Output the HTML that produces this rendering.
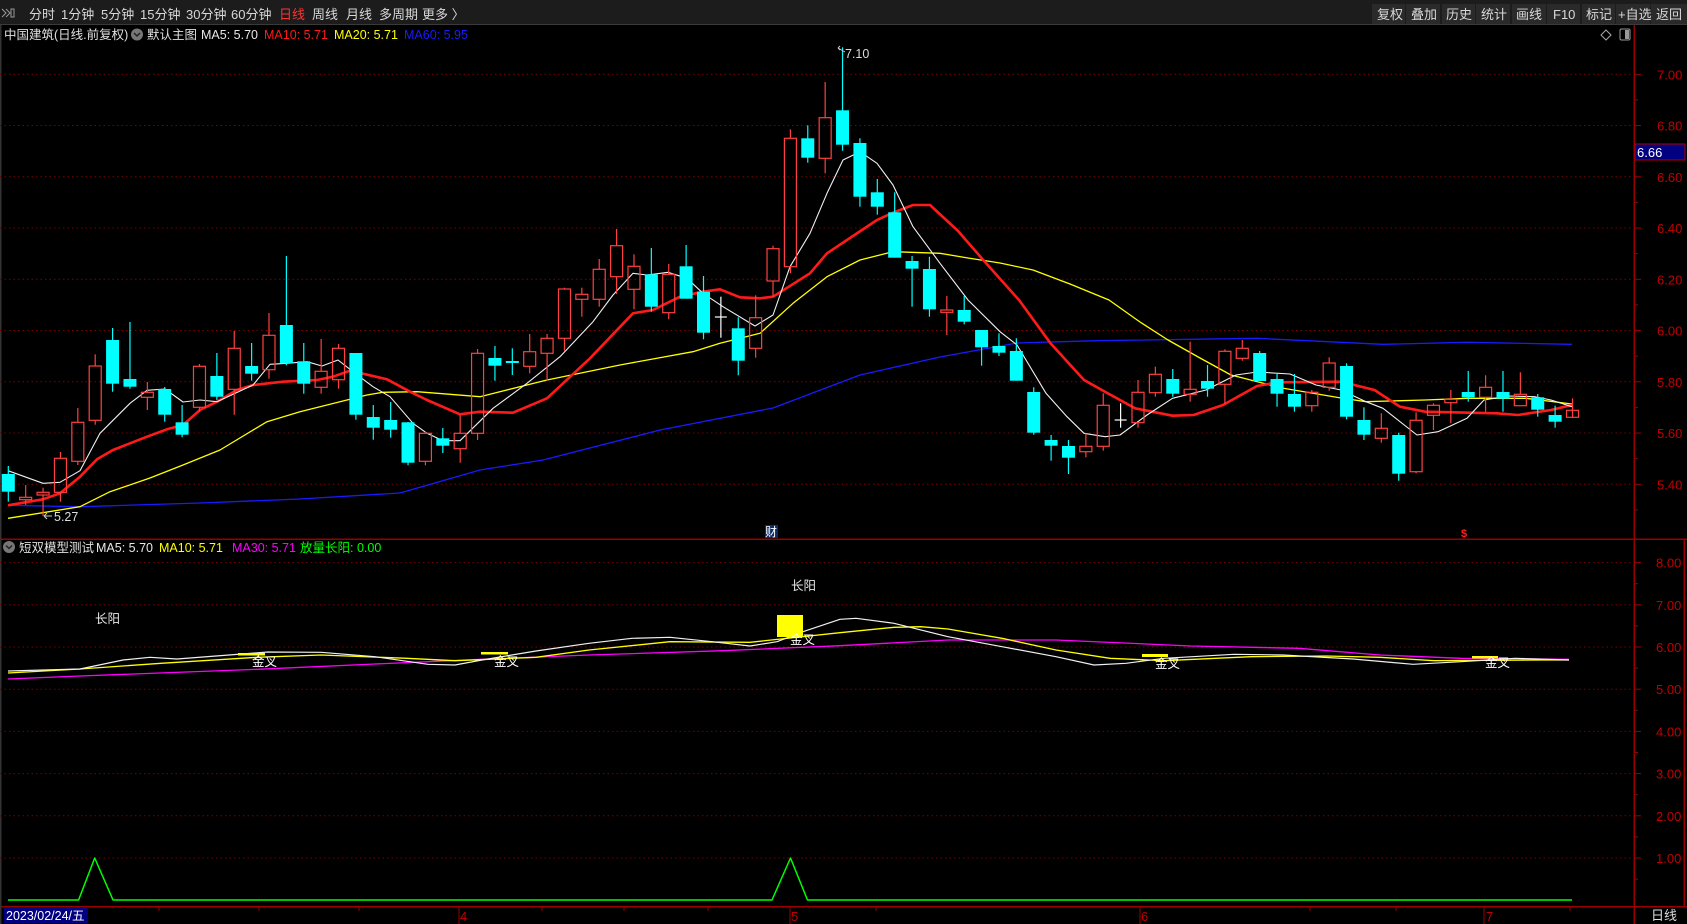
<!DOCTYPE html>
<html><head><meta charset="utf-8">
<style>
html,body{margin:0;padding:0;background:#000;width:1687px;height:924px;overflow:hidden}
body{font-family:"Liberation Sans","Noto Sans CJK SC",sans-serif}
svg{display:block}
</style></head>
<body>
<svg id="s" width="1687" height="924" xmlns="http://www.w3.org/2000/svg" font-family="Liberation Sans, Noto Sans CJK SC, sans-serif">
<rect x="0" y="0" width="1687" height="924" fill="#000"/>
<rect x="0" y="0" width="1687" height="25" fill="#1c1c1c"/>
<rect x="0" y="24" width="1687" height="1" fill="#3a3a3a"/>
<g fill="#2a2a2a">
<rect x="1372" y="4" width="33" height="20"/><rect x="1406" y="4" width="34" height="20"/>
<rect x="1442" y="4" width="33" height="20"/><rect x="1476" y="4" width="34" height="20"/>
<rect x="1512" y="4" width="34" height="20"/><rect x="1547" y="4" width="33" height="20"/>
<rect x="1582" y="4" width="33" height="20"/><rect x="1616" y="4" width="34" height="20"/>
<rect x="1651" y="4" width="36" height="20"/>
</g>
<g fill="none" stroke="#9a9a9a" stroke-width="1">
<path d="M2 9 L6 13 L2 17 M6 9 L10 13 L6 17"/><rect x="11" y="9" width="3" height="8"/>
</g>
<g font-size="13" fill="#d8d8d8">
<text x="29" y="19">分时</text><text x="61" y="19">1分钟</text><text x="101" y="19">5分钟</text>
<text x="140" y="19">15分钟</text><text x="186" y="19">30分钟</text><text x="231" y="19">60分钟</text>
<text x="279" y="19" fill="#ff3333">日线</text><text x="312" y="19">周线</text><text x="346" y="19">月线</text>
<text x="379" y="19">多周期</text><text x="422" y="19">更多 〉</text>
<text x="1377" y="19">复权</text><text x="1411" y="19">叠加</text><text x="1446" y="19">历史</text>
<text x="1481" y="19">统计</text><text x="1516" y="19">画线</text><text x="1553" y="19">F10</text>
<text x="1586" y="19">标记</text><text x="1618" y="19">+自选</text><text x="1656" y="19">返回</text>
</g>
<g font-size="12.5">
<text x="4" y="39" fill="#e0e0e0">中国建筑(日线.前复权)</text>
<circle cx="137" cy="34.5" r="6" fill="#777"/><path d="M134 33 L137 36 L140 33" stroke="#222" stroke-width="1.5" fill="none"/>
<text x="147" y="39" fill="#e0e0e0">默认主图</text>
<text x="201" y="39" fill="#e8e8e8">MA5: 5.70</text>
<text x="264" y="39" fill="#ff1a1a">MA10: 5.71</text>
<text x="334" y="39" fill="#ffff00">MA20: 5.71</text>
<text x="404" y="39" fill="#1a1aff">MA60: 5.95</text>
</g>
<path d="M1606 30 L1611 35 L1606 40 L1601 35 Z" fill="none" stroke="#aaa"/>
<rect x="1620" y="29" width="10" height="11" rx="1.5" fill="none" stroke="#999"/><rect x="1625" y="30" width="4" height="9" fill="#999"/>
<rect x="1633.5" y="25" width="1.5" height="899" fill="#9a0000"/>
<rect x="0" y="538.5" width="1687" height="1.5" fill="#9a0000"/>
<rect x="0" y="906" width="1687" height="1.5" fill="#9a0000"/>
<rect x="1683.5" y="539" width="1.5" height="368" fill="#9a0000"/>
<rect x="0" y="25" width="1.5" height="899" fill="#333"/>
<g id="grid"></g>
<g id="lines"></g>
<g id="candles"></g>
<g id="lower"></g>
<rect x="1635" y="144" width="50" height="16" fill="#000080" stroke="#b00000" stroke-width="1"/>
<text x="1637" y="157" font-size="13" fill="#fff">6.66</text>
<text x="845" y="58" font-size="12.5" fill="#ddd">7.10</text>
<path d="M845 52 L838 48 M838 48 L840 46 M838 48 L840 50" stroke="#ccc" fill="none"/>
<text x="54" y="521" font-size="12.5" fill="#ddd">5.27</text>
<path d="M52 516 L44 516 M44 516 L47 513 M44 516 L47 519" stroke="#ccc" fill="none"/>
<rect x="765" y="525" width="13" height="13" fill="#0a2a6a"/>
<text x="765" y="536" font-size="12" fill="#fff">财</text>
<text x="1461" y="537" font-size="11" fill="#ff2020" font-weight="bold">$</text>
<g font-size="12.5">
<circle cx="9" cy="547" r="6" fill="#777"/><path d="M6 545.5 L9 548.5 L12 545.5" stroke="#222" stroke-width="1.5" fill="none"/>
<text x="19" y="552" fill="#e0e0e0">短双模型测试</text>
<text x="96" y="552" fill="#e8e8e8">MA5: 5.70</text>
<text x="159" y="552" fill="#ffff00">MA10: 5.71</text>
<text x="232" y="552" fill="#ff00ff">MA30: 5.71</text>
<text x="300" y="552" fill="#00ff00">放量长阳: 0.00</text>
</g>
<rect x="4" y="907" width="84" height="16" fill="#000080"/>
<text x="6" y="920" font-size="12.5" fill="#fff">2023/02/24/五</text>
<g font-size="13" fill="#c00000">
<text x="460" y="921">4</text><text x="791" y="921">5</text><text x="1141" y="921">6</text><text x="1486" y="921">7</text>
</g>
<g stroke="#9a0000" stroke-width="1">
<path d="M459 907V924M790 907V924M1140 907V924M1484 907V924"/>
<path d="M159 907V911M259 907V911M359 907V911M542 907V911M624 907V911M708 907V911M876 907V911M1310 907V911M1396 907V911M1570 907V911"/>
</g>
<text x="1651" y="920" font-size="13" fill="#ddd">日线</text>
</svg>
<script>
var NS="http://www.w3.org/2000/svg";
function el(p,t,a,txt){var e=document.createElementNS(NS,t);for(var k in a)e.setAttribute(k,a[k]);if(txt)e.textContent=txt;p.appendChild(e);return e;}
var grid=document.getElementById('grid');
var prices=["7.00","6.80","6.60","6.40","6.20","6.00","5.80","5.60","5.40"];
prices.forEach(function(p,i){var y=74.3+i*51.25;
el(grid,'line',{x1:0,y1:y,x2:1633,y2:y,stroke:'#7a0000','stroke-dasharray':'1.5 3'});
el(grid,'line',{x1:1634,y1:y,x2:1641,y2:y,stroke:'#9a0000'});
el(grid,'line',{x1:1634,y1:y+25.6,x2:1638,y2:y+25.6,stroke:'#9a0000'});
el(grid,'text',{x:1657,y:y+5,'font-size':13,fill:'#c00000'},p);});
for(var v=8;v>=1;v--){var y=858-(v-1)*42.2;
el(grid,'line',{x1:0,y1:y,x2:1633,y2:y,stroke:'#7a0000','stroke-dasharray':'1.5 3'});
el(grid,'line',{x1:1634,y1:y,x2:1641,y2:y,stroke:'#9a0000'});
el(grid,'line',{x1:1634,y1:y+21.1,x2:1638,y2:y+21.1,stroke:'#9a0000'});
el(grid,'text',{x:1656,y:y+5,'font-size':13,fill:'#c00000'},v.toFixed(2));}
var C=[
['d',474,491.7,466,501.7],['u',497.3,499.7,485,505],['u',492.3,495,487.7,516],['u',458.3,492.3,452,501.7],
['u',422.3,461.3,408,465],['u',366,420.3,354.3,424.7],['d',340,383.7,328,391.7],['d',379,386.7,322,388.7],
['u',392.3,397.3,382,410],['d',389,414.7,387,421.7],['d',422.3,434.7,405,437.3],['u',366.3,407.3,364,411.7],
['d',376,396.7,353,400],['u',348.3,389.3,331,414.7],['d',366,373.7,343,380.7],['u',335.3,369.7,313,378.7],
['d',325,363.3,256,365.3],['d',361.3,383.7,343,393.7],['u',371.3,387.3,339,393.7],['u',348.3,379.7,344,388.7],
['d',353,414.7,353,419.7],['d',417,427.7,405,439.7],['d',420,429.7,402,437.7],['d',422.3,462.7,422,465.3],
['u',433.3,461.3,431.7,465.3],['d',438.3,445.7,428,453],['u',433.3,448.7,415.3,462.7],['u',353.3,433.3,349,440],
['d',358,365.7,346,380.7],['d',361,363,348.3,375],['u',351.7,366.3,334,373.3],['u',338.3,353.3,334,380.7],
['u',289,338.3,287.7,350.7],['u',294.3,299.3,287.7,316.7],['u',269.3,299.3,259,306.7],['u',245.7,276.7,229,294],
['u',266.3,289.3,254.3,309.3],['d',274.3,306.7,248,311.7],['u',274.3,312.7,264,319.3],['d',266.3,298.7,245,298.7],
['d',291.7,332.7,276,339.3],['x',317,317,296.7,337.7],['d',328.3,360.7,317.3,375.3],['u',317.7,348.3,295.3,357.7],
['u',248.7,281,245.7,296.7],['u',138.3,266.7,129.3,273.3],['d',138.3,157.7,125.3,162.7],['u',117.7,158.3,82,173.3],
['d',110.3,144.7,47.3,150.7],['d',143,196.7,138.3,206.7],['d',192.3,206.7,179,214.7],['d',212.3,257.7,192.3,257.7],
['d',261,268.7,256,306.7],['d',269,309.3,256.7,316.7],['u',310,312.3,296,335],['d',310,321.7,296,324.3],
['d',330,347.3,330,365.7],['d',346,352.7,333.3,356],['d',351,380.7,338.3,380.7],['d',392,432.7,387.3,434.7],
['d',440,445.7,435,460.7],['d',446,457.7,440,474],['u',446.3,451.7,433.3,457.3],['u',405.3,446.3,393.3,450.7],
['x',420,420,403.3,427.7],['u',392.3,422.7,380,427.7],['u',374.3,392.7,366.7,396.7],['d',379,393.7,369,396.7],
['u',389.3,394.3,341.7,401.7],['d',381,388.7,365,396.7],['u',351.3,384.3,349.3,404],['u',348.3,358.3,340,360.7],
['d',353,381,351,381],['d',379,393.7,374,406.7],['d',394,406.7,374,411.7],['u',392.3,405.7,390,411.7],
['u',363,387.3,357.3,390.7],['d',366,416.7,363.3,419.3],['d',420,434.7,407.3,440],['u',428.3,438.3,413.3,442.7],
['d',435,473.7,432.7,480.7],['u',420.3,471.7,412.3,473.3],['u',405.3,415.3,403.3,430],['u',399.3,402.7,390,423.3],
['d',392,397.3,371,401.7],['u',387.3,397.3,375.3,411.7],['d',392,398.7,371,411.7],['u',394.3,405.7,372.3,405.7],
['d',397.3,409.7,394,416.7],['d',415,421.7,405.7,427.7],['u',410.3,417.3,398.3,410]];
var cg=document.getElementById('candles');
C.forEach(function(c,i){var x=8.3+i*17.38;var t=c[0];
if(t=='d'){el(cg,'line',{x1:x,y1:c[3],x2:x,y2:c[4],stroke:'#00ffff','stroke-width':1.2});
el(cg,'rect',{x:x-6.5,y:c[1],width:13,height:Math.max(1.5,c[2]-c[1]),fill:'#00ffff'});}
else if(t=='u'){el(cg,'line',{x1:x,y1:c[3],x2:x,y2:c[1],stroke:'#ff4040','stroke-width':1.2});
el(cg,'line',{x1:x,y1:c[2],x2:x,y2:c[4],stroke:'#ff4040','stroke-width':1.2});
el(cg,'rect',{x:x-6,y:c[1],width:12,height:Math.max(1,c[2]-c[1]),fill:'none',stroke:'#ff4040','stroke-width':1.2});}
else{el(cg,'line',{x1:x,y1:c[3],x2:x,y2:c[4],stroke:'#fff','stroke-width':1.2});
el(cg,'line',{x1:x-6,y1:c[1],x2:x+6,y2:c[1],stroke:'#fff','stroke-width':1.2});}});
var lg=document.getElementById('lines');
function pl(g,pts,col,w){el(g,'polyline',{points:pts.map(function(p){return p.join(',')}).join(' '),fill:'none',stroke:col,'stroke-width':w,'stroke-linejoin':'round'});}
pl(lg,[[8,505.3],[80,506.7],[200,503],[300,499],[400,493],[480,470],[543,460],[660,430],[773,408],[860,375],[940,357],[1017,343],[1097,340.7],[1257,338.3],[1383,344.3],[1467,342.3],[1572,344.3]],'#1a1aff',1.3);
pl(lg,[[8,518.3],[80,506.7],[110,491.7],[150,478],[183,465],[220,450],[267,421.7],[300,411.7],[367,395],[383,392.3],[417,391.7],[480,396.7],[547,380],[620,365],[693,351.7],[720,343.3],[760,333.3],[793,303.3],[827,276.7],[860,260],[893,251.7],[940,253.3],[968,258],[1000,263],[1033,270],[1070,284],[1109,300],[1140,322],[1168,340],[1200,358],[1231,375],[1282,388],[1341,398],[1366,401.7],[1425,400],[1467,398.3],[1526,398.3],[1572,404]],'#ffff00',1.3);
pl(lg,[[8,505.3],[43,499.3],[60,493.3],[80,476.7],[97,459.3],[113,450],[147,436.7],[167,429.3],[183,425],[200,410],[217,401.7],[237,390],[253,385],[283,381.7],[317,380],[333,376.7],[350,370.7],[387,379.3],[410,391.7],[427,400],[460,414.3],[480,411.7],[513,412.7],[547,398.3],[590,358.3],[633,313.3],[653,310],[680,296.7],[703,291.7],[720,289.3],[740,297.3],[760,298.3],[773,296.7],[810,273.3],[827,253.3],[847,240],[877,220],[893,212.7],[913,205],[930,205],[958,231],[985,262],[1019,300],[1050.5,343.3],[1084,380],[1105,391.7],[1135,408.3],[1172.5,415.7],[1193.6,415],[1223,405],[1257,386],[1278,382.3],[1341,381.7],[1374.5,390],[1400,406.7],[1425,411.7],[1497,413.3],[1518,415],[1551,410],[1572,405]],'#ff1a1a',2.6);
pl(lg,[[8,470.7],[43,483.3],[60,482.3],[80,470.7],[100,433.3],[130,403.3],[147,390.3],[165,389],[183,402],[200,400],[217,401.7],[253,385],[270,364.3],[287,363.3],[307,361.7],[322,366],[338,360],[353,371.7],[373,386.7],[390,396.7],[413,423.3],[427,433.3],[443,440.7],[460,440.7],[493,408.3],[527,383.3],[560,356.7],[593,321.7],[613,295],[633,273.3],[647,275],[668,272.3],[687,278.3],[703,293.3],[723,306.7],[755,326],[773,315],[790,266.7],[810,233.3],[827,193.3],[843,160],[860,151.7],[877,163.3],[893,185],[913,226.7],[940,263.3],[968,300],[1000,331.7],[1017,345],[1046,393.3],[1067,416.7],[1084,433.3],[1105,436.7],[1120,435],[1147,415],[1172.5,398.3],[1206,390],[1236,375],[1257,372],[1290,374],[1316,385],[1341,390],[1366,401.7],[1383,408.3],[1417,435],[1438,431.7],[1467,418.3],[1484,400],[1509,396],[1534.5,396.7],[1551,400],[1572,406.7]],'#f0f0f0',1.1);
var lw=document.getElementById('lower');
pl(lw,[[8,679],[80,676],[257,669.3],[375,664],[482,659.3],[589,655],[723,650.7],[840,645.7],[948,640],[1056,640],[1191,646],[1299,648.3],[1380,655],[1461,658.3],[1569,659.3]],'#ff00ff',1.3);
pl(lw,[[8,673],[80,669],[161,663.3],[257,657.3],[321,655],[407,658.3],[455,660.7],[536,657.3],[589,650],[670,641.7],[750,642.3],[840,632.7],[894,627.3],[921,626.7],[948,629],[1002,638.3],[1056,650],[1110,658.3],[1164,660.7],[1251,656.7],[1326,656],[1380,657.3],[1434,660.7],[1542,660],[1569,660]],'#ffff00',1.3);
pl(lw,[[8,671],[80,669],[123,660],[150,657.3],[177,659],[268,652],[321,652.3],[375,656.7],[428,664.3],[455,665],[482,660],[536,651],[589,643.3],[632,638.3],[670,637.3],[712,641.7],[750,646],[777,641.7],[803,631.7],[840,619.3],[856,618.3],[894,623.3],[948,636.7],[1002,646.7],[1056,656.7],[1094,665],[1126,663.3],[1164,658.3],[1234,654.3],[1283,655],[1353,659],[1413,664.3],[1461,661.7],[1515,658.3],[1569,660]],'#f0f0f0',1.2);
[[238,653,27,2.5],[481,652,27,2.5],[1142,654,26,3],[1472,656,26,2.5]].forEach(function(r){el(lw,'rect',{x:r[0],y:r[1],width:r[2],height:r[3],fill:'#ffff00'});});
el(lw,'rect',{x:777,y:615,width:26,height:22,fill:'#ffff00'});
[[252,666],[494,666],[790,644],[1155,668],[1485,667]].forEach(function(p){el(lw,'text',{x:p[0],y:p[1],'font-size':12.5,fill:'#fff'},'金叉');});
el(lw,'text',{x:95,y:623,'font-size':12.5,fill:'#e8e8e8'},'长阳');
el(lw,'text',{x:791,y:590,'font-size':12.5,fill:'#e8e8e8'},'长阳');
pl(lw,[[8,900],[78.6,900],[94.7,858],[113,900],[772,900],[790.5,858],[807.5,900],[1572,900]],'#00ff00',1.5);
</script>
</body></html>
